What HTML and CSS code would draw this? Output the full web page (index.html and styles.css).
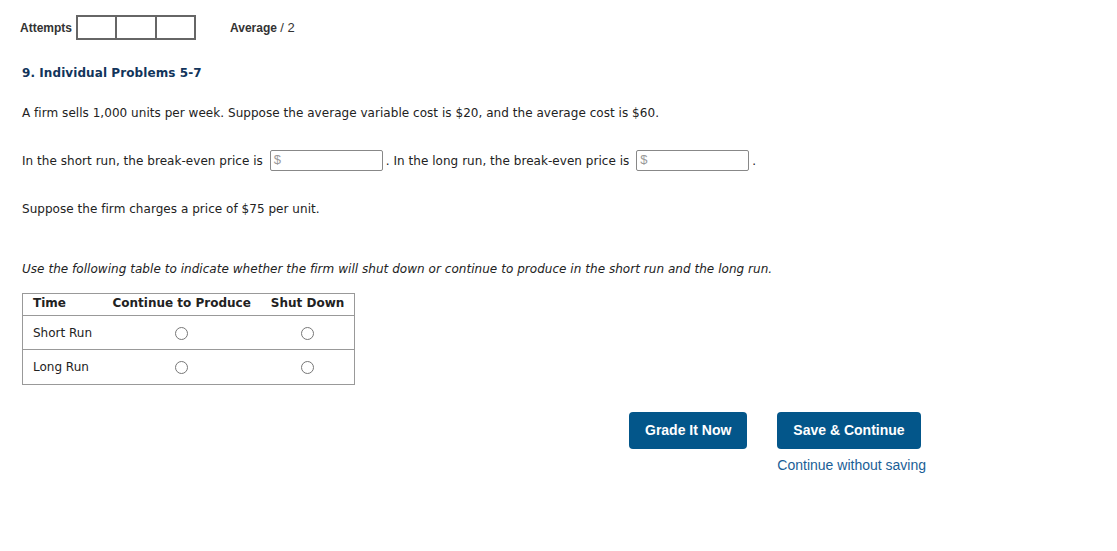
FILE: index.html
```html
<!DOCTYPE html>
<html>
<head>
<meta charset="utf-8">
<link rel="stylesheet" href="styles.css">
</head>
<body>
<div class="page">
  <div class="topbar">
    <span class="label">Attempts</span>
    <div class="attempts">
      <div class="box"></div>
      <div class="box"></div>
      <div class="box"></div>
    </div>
    <span class="average">Average <span class="slash">/ 2</span></span>
  </div>

  <h2 class="title">9. Individual Problems 5-7</h2>

  <p class="text p1">A firm sells 1,000 units per week. Suppose the average variable cost is $20, and the average cost is $60.</p>

  <p class="text p2">In the short run, the break-even price is <span class="input"><span class="dollar">$</span></span>. In the long run, the break-even price is <span class="input"><span class="dollar">$</span></span>.</p>

  <p class="text p3">Suppose the firm charges a price of $75 per unit.</p>

  <p class="text italic">Use the following table to indicate whether the firm will shut down or continue to produce in the short run and the long run.</p>

  <table class="grid">
    <thead>
      <tr><th class="c-time">Time</th><th class="c-cont">Continue to Produce</th><th class="c-shut">Shut Down</th></tr>
    </thead>
    <tbody>
      <tr><td>Short Run</td><td class="ctr"><span class="radio"></span></td><td class="ctr"><span class="radio"></span></td></tr>
      <tr><td>Long Run</td><td class="ctr"><span class="radio"></span></td><td class="ctr"><span class="radio"></span></td></tr>
    </tbody>
  </table>

  <div class="actions">
    <button class="btn">Grade It Now</button>
    <div class="savecol">
      <button class="btn">Save &amp; Continue</button>
      <a class="link">Continue without saving</a>
    </div>
  </div>
</div>
</body>
</html>
```

FILE: styles.css
```css
* { box-sizing: border-box; }
html, body { margin: 0; padding: 0; background: #fff; }
body { font-family: "DejaVu Sans", Verdana, sans-serif; color: #222; }
.page { padding: 15px 0 0 20px; }

.topbar { display: flex; align-items: center; height: 25px; font-family: "Liberation Sans", Arial, sans-serif; font-size: 12px; color: #333; }
.label { font-weight: bold; margin-right: 4px; }
.attempts { display: flex; border: 2px solid #666; height: 25px; width: 120px; }
.box { flex: 1; border-right: 2px solid #666; }
.box:last-child { border-right: none; }
.average { font-weight: bold; margin-left: 34px; }
.slash { font-weight: normal; font-size: 13px; }

.title { margin: 25px 0 0 2px; font-size: 12px; font-weight: bold; color: #12355b; line-height: 16px; letter-spacing: 0.08px; }

.text { margin: 0 0 0 2px; font-size: 12px; line-height: 16px; color: #222; letter-spacing: 0.04px; }
.p1 { margin-top: 24px; }
.p2 { margin-top: 29px; display: flex; align-items: center; white-space: pre; }
.p3 { margin-top: 30px; }
.italic { margin-top: 44px; font-style: italic; }

.input { display: inline-block; width: 113px; height: 21px; border: 1px solid #888; border-radius: 2px; margin: 0 3px 0 3px; padding: 1px 0 0 3px; vertical-align: middle; letter-spacing: 0; }
.dollar { color: #999; font-family: "Liberation Sans", Arial, sans-serif; font-size: 13px; }

.grid { margin: 16px 0 0 2px; border-collapse: collapse; border: 1px solid #999; font-size: 12px; color: #222; }
.grid th { font-weight: bold; text-align: left; height: 22px; padding: 0 10px 3px; border-bottom: 1px solid #999; white-space: nowrap; }
.grid th.c-time { width: 80px; }
.grid td { height: 35px; padding: 0 10px; border-bottom: 1px solid #999; }
.grid tbody tr:first-child td { height: 34px; }
.grid td.ctr { text-align: center; }
.radio { display: inline-block; width: 13px; height: 13px; border: 1px solid #777; border-radius: 50%; vertical-align: middle; }

.actions { display: flex; margin: 27px 0 0 609px; gap: 30px; font-family: "Liberation Sans", Arial, sans-serif; }
.btn { background: #03568a; color: #fff; border: none; border-radius: 4px; height: 37px; padding: 0 16px 2px; font-family: "Liberation Sans", Arial, sans-serif; font-weight: bold; font-size: 14px; }
.savecol { display: flex; flex-direction: column; align-items: flex-start; }
.link { color: #1a5e96; font-size: 14px; margin-top: 8px; }
```
